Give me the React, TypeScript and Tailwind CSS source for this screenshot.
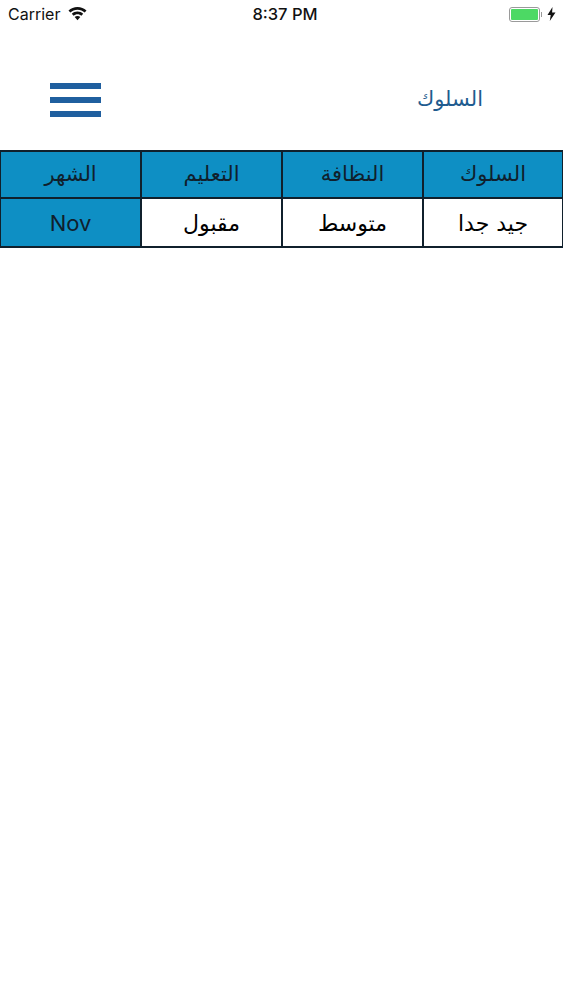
import React from 'react';

const headers = ['الشهر', 'التعليم', 'النظافة', 'السلوك'];
const row = ['Nov', 'مقبول', 'متوسط', 'جيد جدا'];

const WifiIcon = () => (
  <svg width="19" height="14" viewBox="0 0 19 14" fill="#111">
    <path d="M9.5 0C6 0 2.900 1.300.5 3.600l1.800 2C4.200 3.800 6.700 2.700 9.500 2.700s5.300 1.100 7.200 2.900l1.800-2C16.100 1.300 13 0 9.500 0z" />
    <path d="M9.500 4.500c-2.200 0-4.200.8-5.700 2.300l1.800 2c1-1 2.400-1.600 3.900-1.600s2.900.6 3.900 1.600l1.800-2c-1.500-1.500-3.500-2.300-5.700-2.300z" />
    <path d="M9.500 9c-1.100 0-2.100.4-2.800 1.100l2.800 3.100 2.800-3.100C11.600 9.400 10.600 9 9.500 9z" />
  </svg>
);

const BoltIcon = () => (
  <svg width="9" height="14" viewBox="0 0 9 14" fill="#111">
    <path d="M5.500 0 .5 8h3.200L2.800 14 8.500 5.500H5.100z" />
  </svg>
);

const App = () => {
  return (
    <div className="min-h-screen bg-white font-['Liberation_Sans','DejaVu_Sans',sans-serif]">
      {/* Status bar */}
      <div className="h-[28px] grid grid-cols-3 items-center pl-[8px] pr-[7px] text-[#111]">
        <div className="flex items-center gap-[8px] text-[16px] font-['Inter',sans-serif]">
          <span>Carrier</span>
          <WifiIcon />
        </div>
        <div className="pl-[6px] text-center text-[16.5px] font-medium font-['Inter',sans-serif]">8:37 PM</div>
        <div className="flex items-center justify-end gap-[5px]">
          <div className="flex items-center gap-[1px]">
            <div className="w-[31px] h-[15px] rounded-[3px] border border-[#9a9a9a] p-[1px]">
              <div className="h-full rounded-[1px] bg-[#4cd964]" />
            </div>
            <div className="w-[1px] h-[5px] bg-[#9a9a9a]" />
          </div>
          <BoltIcon />
        </div>
      </div>

      {/* Header */}
      <div className="h-[122px] pt-[22px] flex items-center justify-between pl-[50px] pr-[80px]">
        <div className="w-[51px] flex flex-col gap-[8px]">
          <div className="h-[6px] bg-[#1f5f9f]" />
          <div className="h-[6px] bg-[#1f5f9f]" />
          <div className="h-[6px] bg-[#1f5f9f]" />
        </div>
        <span dir="rtl" className="text-[21px] text-[#1f5c8f] font-['DejaVu_Sans',sans-serif]">السلوك</span>
      </div>

      {/* Table */}
      <div className="grid grid-cols-[141px_141px_141px_1fr] border-y-2 border-[#10202c] border-l border-r">
        {headers.map((h, i) => (
          <div key={i} className={`h-[47px] flex items-center justify-center bg-[#0e8fc4] text-[21px] text-[#10202c] font-['DejaVu_Sans',sans-serif] border-b-2 border-[#10202c] ${i < 3 ? 'border-r-2' : ''}`}>
            {h}
          </div>
        ))}
        {row.map((c, i) => (
          <div key={i} className={`h-[47px] pt-[2px] flex items-center justify-center border-[#10202c] ${i < 3 ? 'border-r-2' : ''} ${i === 0 ? "bg-[#0e8fc4] text-[#10202c] text-[22px] font-['Inter',sans-serif]" : "bg-white text-black text-[22px] font-['DejaVu_Sans',sans-serif]"}`}>
            {c}
          </div>
        ))}
      </div>
    </div>
  );
};

export default App;
